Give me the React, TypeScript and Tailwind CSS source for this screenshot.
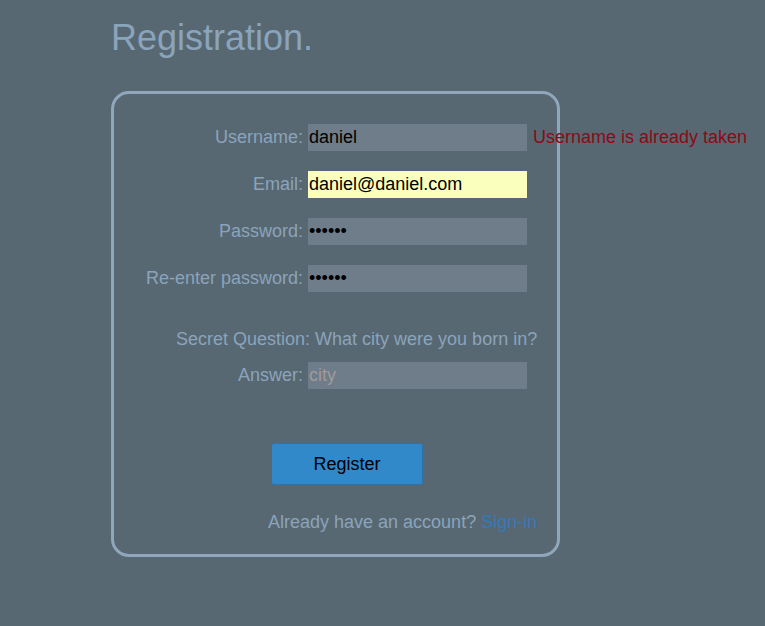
import React from "react";

/**
 * ==============   Styles   ================
 */

const font = { fontFamily: '"Liberation Sans", Arial, sans-serif' };

const inputCls =
  "shrink-0 w-[219px] h-[27px] border-0 outline-none pl-[1px] text-[18px] text-black bg-[#6e7d89] placeholder:text-[#a19a9b]";

const labelCls = "shrink-0 w-[189px] text-right text-[18px] text-[#8aa4bb] whitespace-nowrap";

/**
 * ==============   Data   ================
 */

const rows = [
  { label: "Username:", type: "text", value: "daniel", error: "Username is already taken" },
  { label: "Email:", type: "text", value: "daniel@daniel.com", autofill: true },
  { label: "Password:", type: "password", value: "123456" },
  { label: "Re-enter password:", type: "password", value: "123456" },
];

export default function App() {
  return (
    <div style={font} className="min-h-screen w-full bg-[#586872] pl-[111px] pt-[18px]">
      <h1 className="text-[36px] leading-[40px] text-[#8aa4bb] font-normal">Registration.</h1>

      <div className="mt-[33px] w-[449px] h-[466px] border-[3px] border-[#8fa6bd] rounded-[18px] flex flex-col pt-[30px]">
        <div className="flex flex-col gap-[20px]">
          {rows.map((r) => (
            <div key={r.label} className="flex items-center h-[27px]">
              <label className={labelCls}>{r.label}</label>
              <input
                type={r.type}
                readOnly
                defaultValue={r.value}
                className={`ml-[5px] ${inputCls} ${r.autofill ? "!bg-[#faffbd]" : ""}`}
              />
              {r.error ? (
                <span className="shrink-0 ml-[6px] text-[18px] text-[#8b0a14] whitespace-nowrap">{r.error}</span>
              ) : null}
            </div>
          ))}
        </div>

        <p className="mt-[37px] ml-[62px] text-[18px] leading-[21px] text-[#8aa4bb] whitespace-nowrap">
          Secret Question: What city were you born in?
        </p>

        <div className="mt-[12px] flex items-center h-[27px]">
          <label className={labelCls}>Answer:</label>
          <input type="text" readOnly placeholder="city" className={`ml-[5px] ${inputCls}`} />
        </div>

        <button className="mt-[54px] ml-[157px] w-[152px] h-[42px] bg-[#3189c9] border border-[#2b73ad] rounded-[3px] text-[18px] text-black">
          Register
        </button>

        <p className="mt-[27px] ml-[154px] text-[18px] leading-[21px] text-[#8aa4bb] whitespace-nowrap">
          Already have an account? <a className="text-[#2f7bbd]">Sign-in</a>
        </p>
      </div>
    </div>
  );
}
